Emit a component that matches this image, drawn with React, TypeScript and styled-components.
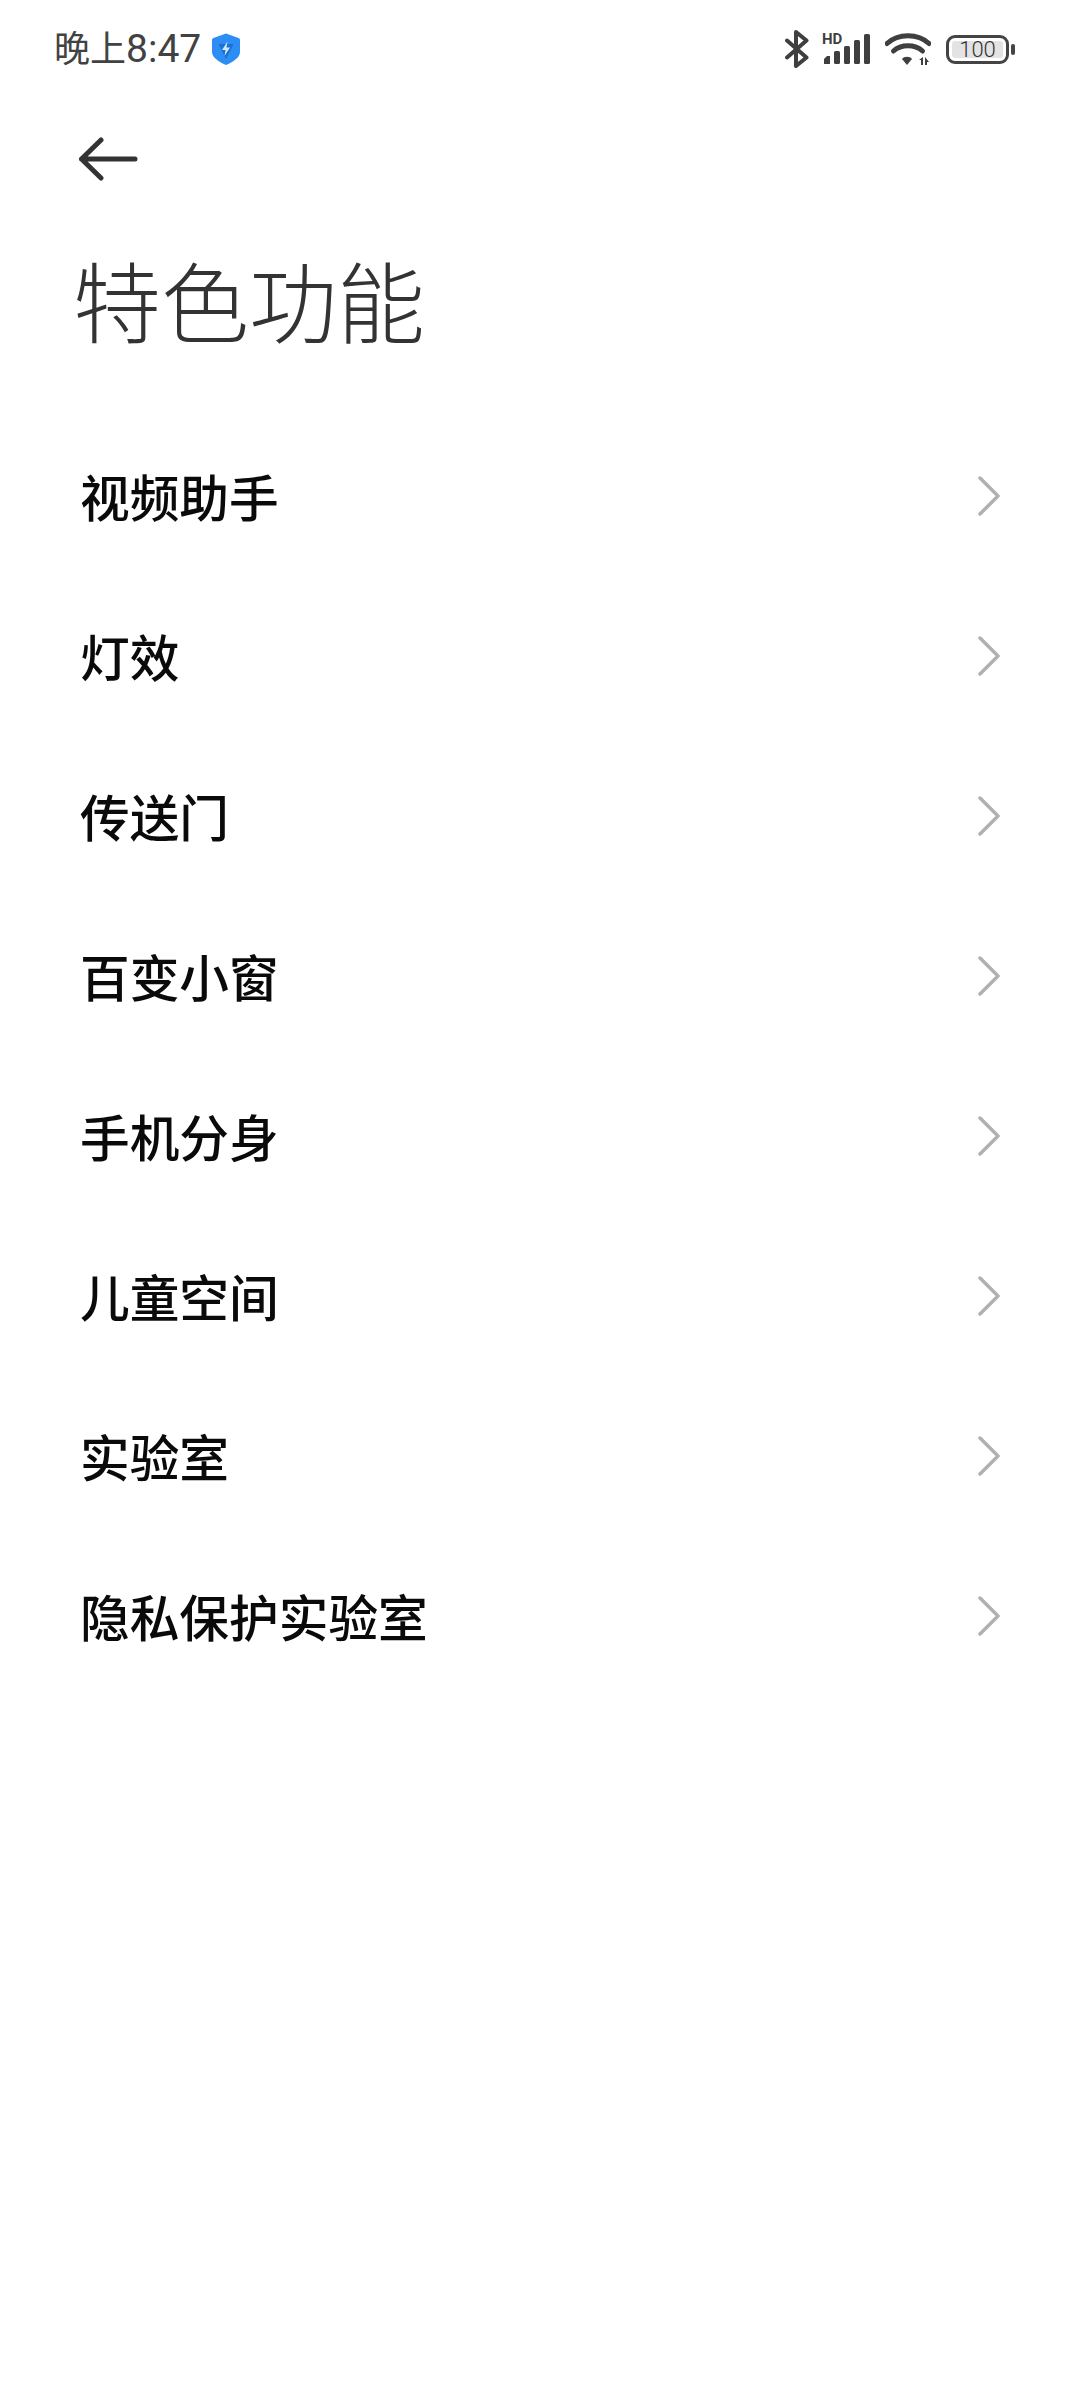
import { FC } from "react";
import styled, { createGlobalStyle } from "styled-components";

const ITEMS = [
  "视频助手",
  "灯效",
  "传送门",
  "百变小窗",
  "手机分身",
  "儿童空间",
  "实验室",
  "隐私保护实验室",
];

const App: FC = () => {
  return (
    <Page>
      <GlobalStyle />
      <StatusBar>
        <StatusLeft>
          <Time>
            晚上<Clock>8:47</Clock>
          </Time>
          <ShieldIcon />
        </StatusLeft>
        <StatusRight>
          <BluetoothIcon />
          <SignalIcon />
          <WifiIcon />
          <BatteryIcon />
        </StatusRight>
      </StatusBar>
      <BackBtn>
        <svg width="60" height="44" viewBox="0 0 60 44" fill="none">
          <path
            d="M23 3 L3.5 22 L23 41 M3.5 22 H57"
            stroke="#333"
            strokeWidth="5"
            strokeLinecap="round"
            strokeLinejoin="round"
          />
        </svg>
      </BackBtn>
      <Title>特色功能</Title>
      <List>
        {ITEMS.map((item) => (
          <Row key={item}>
            <RowLabel>{item}</RowLabel>
            <Chevron />
          </Row>
        ))}
      </List>
    </Page>
  );
};

export default App;

const ShieldIcon = () => (
  <ShieldSvg width="28" height="32" viewBox="0 0 28 32">
    <path
      d="M14 .5 L26.500 5 C27.500 5.500 28 6 28 7 V19 C28 24 22 28.500 14 32 C6 28.500 0 24 0 19 V7 C0 6 .5 5.500 1.500 5 Z"
      fill="#2c8df4"
    />
    <path d="M6.500 11 L21.500 11 L14 26 Z" fill="#1a6fd0" />
    <path d="M15.500 8.500 L10 17 H13.500 L12.500 23 L18 14.500 H14.500 Z" fill="#cfe6fb" />
  </ShieldSvg>
);

const BluetoothIcon = () => (
  <svg width="24" height="38" viewBox="0 0 24 38" fill="none">
    <path
      d="M2 10.500 L21.500 27.500 L11 36 V2 L21.500 10.500 L2 27.500"
      stroke="#3f3f3f"
      strokeWidth="4"
      strokeLinecap="round"
      strokeLinejoin="round"
    />
  </svg>
);

const SignalIcon = () => (
  <SignalSvg width="50" height="40" viewBox="0 -8 50 40">
    <text x="0" y="11" fontFamily="Roboto, sans-serif" fontWeight="700" fontSize="15" fill="#3f3f3f">
      HD
    </text>
    <path d="M2 31 V26 L5 23 H8 V31 Z" fill="#3f3f3f" />
    <rect x="12" y="18" width="6" height="13" rx="1.500" fill="#3f3f3f" />
    <rect x="22" y="13" width="6" height="18" rx="1.500" fill="#3f3f3f" />
    <rect x="32" y="7" width="6" height="24" rx="1.500" fill="#3f3f3f" />
    <rect x="42" y="1" width="6" height="30" rx="1.500" fill="#3f3f3f" />
  </SignalSvg>
);

const WifiIcon = () => (
  <svg width="46" height="34" viewBox="0 0 46 34" fill="none">
    <path d="M2 11.500 C13 1 33 1 44 11.500" stroke="#3f3f3f" strokeWidth="5" strokeLinecap="round" />
    <path d="M8.500 19 C16 12 30 12 37.500 19" stroke="#3f3f3f" strokeWidth="5" strokeLinecap="round" />
    <path d="M17 27 C19 24 25 24 27 27 L22 33 Z" fill="#3f3f3f" />
    <path d="M34 28 L38 25 V33 H36 V28 Z M40 25 L44 30 H42 V33 H40 Z" fill="#3f3f3f" />
  </svg>
);

const BatteryIcon = () => (
  <BatteryWrap>
    <BatteryBody>
      <BatteryFill>100</BatteryFill>
    </BatteryBody>
    <BatteryCap />
  </BatteryWrap>
);

const Chevron = () => (
  <svg width="22" height="40" viewBox="0 0 22 40" fill="none">
    <path
      d="M2 2 L20 20 L2 38"
      stroke="#b0b0b0"
      strokeWidth="3.500"
      strokeLinecap="round"
      strokeLinejoin="round"
    />
  </svg>
);

const GlobalStyle = createGlobalStyle`
  html, body {
    margin: 0;
    padding: 0;
    background: #fff;
  }
  * {
    box-sizing: border-box;
  }
`;

const Page = styled.div`
  width: 1080px;
  height: 2400px;
  background: #fff;
  overflow: hidden;
  font-family: "Noto Sans CJK SC", "Noto Sans", sans-serif;
`;

const StatusBar = styled.div`
  display: flex;
  justify-content: space-between;
  align-items: center;
  height: 98px;
  padding: 0 65px 0 54px;
`;

const StatusLeft = styled.div`
  display: flex;
  align-items: center;
  gap: 11px;
`;

const Time = styled.span`
  margin-bottom: 3px;
  font-family: "Noto Sans CJK SC", sans-serif;
  font-size: 36px;
  line-height: 40px;
  color: #424242;
`;

const Clock = styled.span`
  font-family: Roboto, sans-serif;
  font-size: 39px;
`;

const ShieldSvg = styled.svg`
  display: block;
`;

const SignalSvg = styled.svg`
  display: block;
  margin-top: -8px;
`;

const StatusRight = styled.div`
  display: flex;
  align-items: center;
  gap: 13px;
`;

const BatteryWrap = styled.div`
  display: flex;
  align-items: center;
  gap: 2px;
  margin-left: 2px;
`;

const BatteryBody = styled.div`
  width: 63px;
  height: 29px;
  border: 3px solid #444;
  border-radius: 9px;
  padding: 3px 3px;
  display: flex;
`;

const BatteryFill = styled.div`
  flex: 1;
  background: #e3e3e3;
  border-radius: 3px;
  font-family: Roboto, sans-serif;
  font-size: 22px;
  font-weight: 300;
  line-height: 17px;
  color: #333;
  text-align: center;
`;

const BatteryCap = styled.div`
  width: 4px;
  height: 11px;
  border-radius: 2px;
  background: #444;
`;

const BackBtn = styled.div`
  display: flex;
  align-items: center;
  height: 44px;
  margin-top: 39px;
  padding-left: 78px;
`;

const Title = styled.h1`
  margin: 57px 0 0;
  padding-left: 73px;
  font-size: 88px;
  font-weight: 300;
  line-height: 120px;
  color: #333;
`;

const List = styled.div`
  display: flex;
  flex-direction: column;
  margin-top: 58px;
`;

const Row = styled.div`
  display: flex;
  justify-content: space-between;
  align-items: center;
  height: 160px;
  padding: 0 80px 0 80px;
`;

const RowLabel = styled.span`
  margin-bottom: 3px;
  font-size: 49.700px;
  font-weight: 500;
  line-height: 70px;
  color: #0a0a0a;
`;
